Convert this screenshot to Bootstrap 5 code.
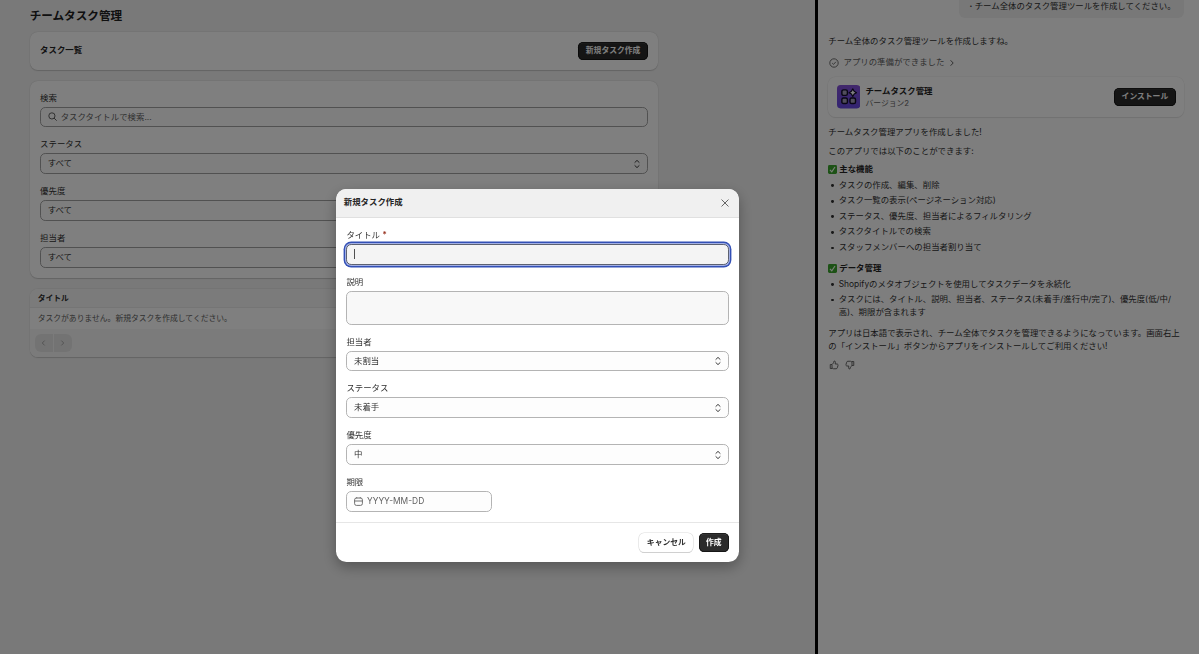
<!DOCTYPE html>
<html lang="ja">
<head>
<meta charset="utf-8">
<meta name="viewport" content="width=device-width, initial-scale=1">
<title>チームタスク管理</title>
<link href="https://cdn.jsdelivr.net/npm/bootstrap@5.3.0/dist/css/bootstrap.min.css" rel="stylesheet">
<style>
  body { font-family: Inter, "Noto Sans CJK JP", sans-serif; font-size: 8.42px; line-height: 13px; color: #303030; background: #f1f1f1; height: 654px; overflow: hidden; }
  svg { display: block; fill: none; stroke: currentColor; flex: none; }
  .app-main { width: 815px; padding: 8px 0 0 29.7px; background: #f2f2f2; }
  .page-col { width: 628.5px; }
  .page-title { font-size: 11.6px; line-height: 16px; font-weight: 700; margin: 0 0 7.6px; color: #202020; }
  .panel { background: #fff; border-radius: 7.8px; box-shadow: 0 .7px 1px rgba(0,0,0,.16), 0 0 0 .5px rgba(0,0,0,.04); margin-bottom: 10.2px; overflow: hidden; }
  .panel-head { height: 38.8px; padding: 0 10.4px; }
  .panel-form { padding: 10.4px; height: 197.8px; }
  .strong { font-weight: 700; color: #252525; }
  .field { margin-bottom: 10.4px; }
  .field > label { display: block; line-height: 13px; padding-top: .6px; height: 13px; margin-bottom: 2.6px; }
  .box { display: flex; align-items: center; height: 20.8px; padding: 0 6.2px 0 6.6px; border: 1px solid #b4b4b4; border-radius: 5.2px; background: #fdfdfd; width: 100%; }
  .page-col .box { border-color: #a2a2a2; }
  .box span { flex: 1; padding-top: .5px; }
  .hint { color: #616161; }
  .req { color: #8e1f0b; }
  .btn-app { display: inline-flex; align-items: center; justify-content: center; height: 18.5px; padding: 0 7.4px; font-size: 7.8px; line-height: 1; font-weight: 600; border-radius: 5.2px; border: 0; white-space: nowrap; }
  .btn-app.dark { background: #2b2b2b; color: #fff; box-shadow: inset 0 0 0 .8px #111, inset 0 1.2px 0 #4a4a4a; }
  .btn-app.lite { background: #fff; color: #303030; box-shadow: 0 0 0 .6px #dcdcdc, 0 1px 0 #c4c4c4; }
  .t-head { height: 19.6px; background: #f7f7f7; padding: 1px 8px 0; border-bottom: 1px solid #ebebeb; font-size: 7.8px; }
  .t-row { height: 20.4px; padding: 0 8px; color: #616161; font-size: 7.8px; }
  .t-foot { height: 28.5px; background: #f7f7f7; padding: 0 5.2px; gap: .7px; }
  .pg { width: 18px; height: 18.4px; background: #e6e6e6; color: #a8a8a8; display: flex; align-items: center; justify-content: center; }
  .chat { width: 384px; border-left: 3px solid #000; padding: 0 15px 0 10.3px; background: #fdfdfd; }
  .bubble { align-self: flex-end; width: 225px; height: 17.8px; background: #f0f0f0; border-radius: 0 0 6px 6px; padding-left: 10.5px; white-space: nowrap; }
  .bubble b { display: inline-block; width: 5.2px; }
  .chat p { margin: 5.2px 0 0; }
  .chat p.reply { margin-top: 17.4px; }
  .chat p.done { margin-top: 9px; }
  .ready { margin-top: 8px; padding-left: 1px; gap: 4.2px; }
  .app-card { height: 40.4px; margin-top: 7.8px; border-radius: 7.8px; box-shadow: 0 0 0 .6px #ececec, 0 1px 1px #dcdcdc; padding: 0 8.4px; background: #fff; }
  .app-name { margin-left: 5.4px; line-height: 11.8px; padding-top: 1px; }
  .app-name small { display: block; font-size: 7.8px; }
  .sec { margin-top: 5.2px; gap: 2px; }
  .chat ul { list-style: none; padding-left: 10.4px; margin: 2.8px 0 0; }
  .chat li { margin-bottom: 2.6px; position: relative; }
  .chat li::before { content: ""; position: absolute; left: -7.6px; top: 5.6px; width: 2.8px; height: 2.8px; border-radius: 50%; background: #303030; }
  .rate { margin-top: 7.6px; padding-left: 1.1px; gap: 5.8px; }
  .modal-backdrop { --bs-backdrop-opacity: .5; }
  .modal-dialog.task { margin: 188.8px 0 0 336px; width: 403.4px; max-width: none; }
  .task .modal-content { border: 0; border-radius: 10.4px; overflow: hidden; box-shadow: 0 5px 14px rgba(0,0,0,.3); color: #303030; }
  .task .modal-header { height: 29px; padding: 0 10.4px 0 7.8px; background: #f0f0f0; border-bottom: 1px solid #e0e0e0; }
  .task .modal-header svg { color: #666; }
  .task .modal-body { padding: 10.4px; height: 304.6px; }
  .task .modal-footer { height: 39.6px; padding: 0 10.4px; gap: 5.4px; border-top: 1px solid #e6e6e6; }
  .task .modal-footer > * { margin: 0; }
  .box.active { background: #f4f4f4; border-color: #5c6170; box-shadow: 0 0 0 1px #a3b0e4, 0 0 0 2.4px #3350b6; }
  .caret { width: 1px; height: 10.5px; margin-left: .4px; background: #505050; }
  .box.area { height: 34px; background: #f8f8f8; }
  .box.date { width: 146px; gap: 4px; }
</style>
<script src="https://cdn.jsdelivr.net/npm/bootstrap@5.3.0/dist/js/bootstrap.bundle.min.js"></script>
</head>
<body>
<svg width="0" height="0" class="position-absolute">
  <symbol id="updown" viewBox="0 0 8 10"><path d="M1.9 3.4 4 1.4l2.1 2M1.900 6.600 4 8.600l2.100-2" stroke-width=".95" stroke-linecap="round" stroke-linejoin="round"/></symbol>
  <symbol id="check" viewBox="0 0 9 9"><rect width="9" height="9" rx="1.400" fill="#3aa52c" stroke="none"/><path d="m2 4.800 1.800 2L7 2" stroke="#f4fff2" stroke-width="1.200"/></symbol>
</svg>
<div class="d-flex h-100">
  <main class="app-main flex-shrink-0">
    <div class="page-col">
      <h1 class="page-title">チームタスク管理</h1>
      <section class="panel panel-head d-flex align-items-center justify-content-between">
        <span class="strong">タスク一覧</span>
        <button class="btn-app dark">新規タスク作成</button>
      </section>
      <section class="panel panel-form">
        <div class="field"><label>検索</label>
          <div class="box hint"><svg class="me-1" width="9" height="9" viewBox="0 0 9 9"><circle cx="3.900" cy="3.900" r="3.100"/><path d="m6.200 6.200 2.200 2.200" stroke-linecap="round"/></svg><span>タスクタイトルで検索...</span></div></div>
        <div class="field"><label>ステータス</label><div class="box"><span>すべて</span><svg width="8" height="10"><use href="#updown"/></svg></div></div>
        <div class="field"><label>優先度</label><div class="box"><span>すべて</span><svg width="8" height="10"><use href="#updown"/></svg></div></div>
        <div class="field"><label>担当者</label><div class="box"><span>すべて</span><svg width="8" height="10"><use href="#updown"/></svg></div></div>
      </section>
      <section class="panel">
        <div class="t-head d-flex align-items-center fw-semibold">タイトル</div>
        <div class="t-row d-flex align-items-center">タスクがありません。新規タスクを作成してください。</div>
        <div class="t-foot d-flex align-items-center">
          <span class="pg rounded-start-2"><svg width="5" height="8" viewBox="0 0 5 8"><path d="M3.600 1.600 1.300 4l2.300 2.400"/></svg></span>
          <span class="pg rounded-end-2"><svg width="5" height="8" viewBox="0 0 5 8"><path d="M1.400 1.600 3.700 4 1.400 6.400"/></svg></span>
        </div>
      </section>
    </div>
  </main>
  <aside class="chat d-flex flex-column flex-shrink-0">
    <div class="bubble"><b>·</b>チーム全体のタスク管理ツールを作成してください。</div>
    <p class="reply">チーム全体のタスク管理ツールを作成しますね。</p>
    <div class="ready d-flex align-items-center hint">
      <svg width="10" height="10" viewBox="0 0 10 10"><circle cx="5" cy="5" r="4.200" stroke-width=".9"/><path d="m3.200 5.100 1.300 1.300 2.400-2.600" stroke-width=".9"/></svg>
      <span>アプリの準備ができました</span>
      <svg width="6" height="8" viewBox="0 0 6 8"><path d="M1.600 1.300 4.200 4 1.600 6.700"/></svg>
    </div>
    <div class="app-card d-flex align-items-center">
      <svg width="23.4" height="23.4" viewBox="0 0 36 36"><defs><linearGradient id="g" x1="0" y1="0" x2="0" y2="1"><stop offset="0" stop-color="#8450d8"/><stop offset="1" stop-color="#6648e4"/></linearGradient></defs>
        <rect width="36" height="36" rx="5.500" fill="url(#g)" stroke="none"/>
        <g fill="#a39ab8" stroke="#120c28" stroke-width="2.200"><rect x="7.500" y="7.500" width="8.500" height="8.500" rx="2.500"/><rect x="7.500" y="20" width="8.500" height="8.500" rx="2.500"/><rect x="20" y="20" width="8.500" height="8.500" rx="2.500"/><path fill="#fff" stroke-width="1.800" stroke-linejoin="round" d="M24.300 6 26.400 9.700 30 11.800l-3.600 2.100-2.100 3.700-2.100-3.700-3.600-2.100 3.600-2.100z"/></g></svg>
      <div class="app-name flex-fill"><div class="strong">チームタスク管理</div><small class="hint">バージョン2</small></div>
      <button class="btn-app dark">インストール</button>
    </div>
    <p class="done">チームタスク管理アプリを作成しました!</p>
    <p>このアプリでは以下のことができます:</p>
    <div class="sec d-flex align-items-center strong"><svg width="9" height="9"><use href="#check"/></svg>主な機能</div>
    <ul>
      <li>タスクの作成、編集、削除</li>
      <li>タスク一覧の表示(ページネーション対応)</li>
      <li>ステータス、優先度、担当者によるフィルタリング</li>
      <li>タスクタイトルでの検索</li>
      <li>スタッフメンバーへの担当者割り当て</li>
    </ul>
    <div class="sec d-flex align-items-center strong"><svg width="9" height="9"><use href="#check"/></svg>データ管理</div>
    <ul>
      <li>Shopifyのメタオブジェクトを使用してタスクデータを永続化</li>
      <li>タスクには、タイトル、説明、担当者、ステータス(未着手/進行中/完了)、優先度(低/中/<br>高)、期限が含まれます</li>
    </ul>
    <p class="text-nowrap">アプリは日本語で表示され、チーム全体でタスクを管理できるようになっています。画面右上<br>の「インストール」ボタンからアプリをインストールしてご利用ください!</p>
    <div class="rate d-flex hint">
      <svg width="10" height="10" viewBox="0 0 20 20" stroke-width="1.900" stroke-linejoin="round"><path id="thumb" d="M6 9H2.500v8H6M6 9l3.200-3.200L10 2.200c2.200-.3 3.200 1 2.900 3L12.400 8H16c1.600 0 2.400 1.300 2 2.800l-1.300 4.700c-.4 1.300-1.200 2-2.500 2H9L6 16z"/></svg>
      <svg width="10" height="10" viewBox="0 0 20 20" stroke-width="1.900" stroke-linejoin="round"><use href="#thumb" transform="rotate(180 10 10)"/></svg>
    </div>
  </aside>
</div>

<div class="modal-backdrop show"></div>
<div class="modal d-block" tabindex="-1" role="dialog">
  <div class="modal-dialog task">
    <div class="modal-content">
      <div class="modal-header"><span class="strong">新規タスク作成</span>
        <svg width="8" height="8" viewBox="0 0 8 8"><path d="m.8.8 6.400 6.400M7.200.8.8 7.200" stroke-linecap="round"/></svg></div>
      <div class="modal-body">
        <div class="field"><label>タイトル <span class="req">*</span></label><div class="box active"><i class="caret"></i></div></div>
        <div class="field"><label>説明</label><div class="box area"></div></div>
        <div class="field"><label>担当者</label><div class="box"><span>未割当</span><svg width="8" height="10"><use href="#updown"/></svg></div></div>
        <div class="field"><label>ステータス</label><div class="box"><span>未着手</span><svg width="8" height="10"><use href="#updown"/></svg></div></div>
        <div class="field"><label>優先度</label><div class="box"><span>中</span><svg width="8" height="10"><use href="#updown"/></svg></div></div>
        <div class="field"><label>期限</label><div class="box date hint"><svg width="9" height="9" viewBox="0 0 9 9"><rect x=".6" y="1" width="7.800" height="7.400" rx="1.800" stroke-width=".9"/><path d="M.6 4h7.800M2.700.2v1.200M6.300.2v1.200" stroke-width=".9"/></svg><span>YYYY-MM-DD</span></div></div>
      </div>
      <div class="modal-footer"><button class="btn-app lite">キャンセル</button><button class="btn-app dark">作成</button></div>
    </div>
  </div>
</div>
</body>
</html>
